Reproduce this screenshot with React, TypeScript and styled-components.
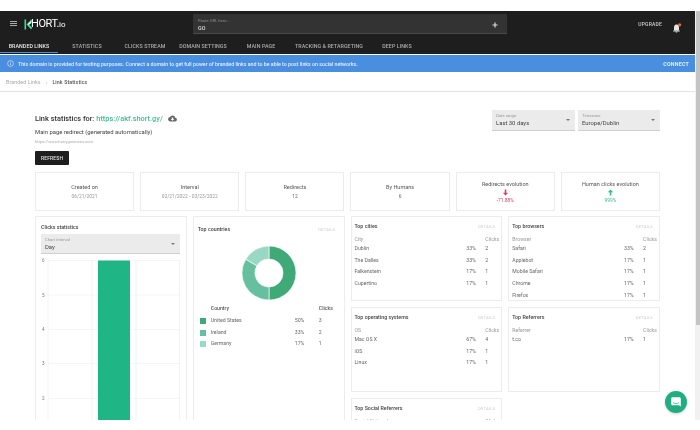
import React from "react";
import styled, { createGlobalStyle } from "styled-components";

const Global = createGlobalStyle`
  html, body { margin: 0; padding: 0; background: #fff; }
  body { width: 700px; height: 430px; overflow: hidden; font-family: Roboto, "Liberation Sans", sans-serif; }
`;

const Shot = styled.div`
  width: 700px;
  height: 430px;
  padding-top: 11px;
  box-sizing: border-box;
  display: flex;
  align-items: flex-start;
  background: #fff;
  filter: blur(0.75px);
`;
const Page = styled.div`
  width: 695px;
  height: 409px;
  overflow: hidden;
  display: flex;
  flex-direction: column;
  flex: none;
  color: #333;
`;
const ScrollTrack = styled.div`
  width: 5px;
  height: 409px;
  background: #f1f1f1;
  flex: none;
`;
const ScrollThumb = styled.div`
  width: 4px;
  height: 314px;
  margin-left: 1px;
  background: #c4c4c4;
`;

const Header = styled.header`
  background: #1e1e1e;
  height: 43px;
  flex: none;
  display: flex;
  flex-direction: column;
  color: #fff;
`;
const TopRow = styled.div`
  height: 29px;
  display: flex;
  align-items: flex-start;
  padding-left: 10px;
  padding-right: 13px;
`;
const Burger = styled.div`
  width: 7px;
  height: 3px;
  margin-top: 10px;
  border-top: 1px solid #aaa;
  border-bottom: 1px solid #aaa;
  box-sizing: content-box;
  background: linear-gradient(#aaa, #aaa) center / 100% 1px no-repeat;
`;
const Logo = styled.div`
  display: flex;
  align-items: center;
  margin-left: 7px;
  margin-top: 6px;
  height: 14px;
  width: 169px;
  color: #fff;
`;
const LogoText = styled.span`
  font-size: 11px;
  font-weight: 400;
  letter-spacing: -0.4px;
  line-height: 14px;
  margin-left: -2px;
`;
const LogoSuffix = styled.span`
  font-size: 8px;
  font-weight: 400;
`;
const UrlBox = styled.div`
  width: 314px;
  height: 20px;
  margin-top: 3px;
  background: #333;
  border-bottom: 1px solid #4a4a4a;
  box-sizing: border-box;
  padding: 3px 9px 0 5px;
  display: flex;
  align-items: center;
`;
const UrlFields = styled.div`
  flex: 1;
  display: flex;
  flex-direction: column;
`;
const UrlHint = styled.span`
  font-size: 4.2px;
  line-height: 6px;
  color: #8b8b8b;
`;
const UrlValue = styled.span`
  font-size: 5.4px;
  line-height: 8px;
  font-weight: 500;
  color: #ddd;
`;
const Upgrade = styled.span`
  font-size: 5px;
  font-weight: 500;
  letter-spacing: 0.2px;
  color: #ccc;
  margin-left: auto;
  margin-top: 10px;
  line-height: 7px;
`;
const BellWrap = styled.div`
  margin-left: 10px;
  margin-top: 7px;
  width: 10px;
  height: 10px;
`;
const Tabs = styled.nav`
  height: 14px;
  display: flex;
`;
const Tab = styled.div<{ $active?: boolean }>`
  min-width: 58px;
  padding: 0 5px;
  box-sizing: border-box;
  text-align: center;
  font-size: 5.3px;
  font-weight: 500;
  letter-spacing: 0.06px;
  line-height: 12px;
  white-space: nowrap;
  color: ${(p) => (p.$active ? "#e8e8e8" : "#ababab")};
  border-bottom: 1px solid ${(p) => (p.$active ? "#4a8ee0" : "transparent")};
  height: 13px;
`;
const Banner = styled.div`
  margin-top: 1px;
  height: 17px;
  flex: none;
  background: #4a8ee0;
  color: #e3eefb;
  display: flex;
  align-items: center;
  padding: 0 6px 0 7px;
  font-size: 5.25px;
  font-weight: 500;
`;
const BannerText = styled.span`
  margin-left: 4px;
  white-space: nowrap;
`;
const BannerAction = styled.span`
  margin-left: auto;
  font-weight: 700;
  letter-spacing: 0.25px;
`;
const Crumbs = styled.div`
  height: 20px;
  flex: none;
  border-bottom: 1px solid #e2e2e2;
  box-sizing: border-box;
  display: flex;
  align-items: center;
  gap: 5px;
  padding-left: 6px;
  font-size: 5.3px;
  letter-spacing: 0.1px;
  color: #aaa;
`;
const CrumbCurrent = styled.span`
  color: #555;
  font-weight: 500;
`;
const Content = styled.main`
  padding: 0 35px;
  display: flex;
  flex-direction: column;
  min-height: 0;
`;
const Intro = styled.section`
  height: 80px;
  flex: none;
  display: flex;
  justify-content: space-between;
`;
const IntroLeft = styled.div`
  display: flex;
  flex-direction: column;
  align-items: flex-start;
  padding-top: 21px;
`;
const TitleRow = styled.div`
  display: flex;
  align-items: center;
  height: 11px;
  font-size: 7.4px;
  font-weight: 500;
  color: #333;
  white-space: nowrap;
`;
const TitleLink = styled.span`
  color: #3fbd92;
  margin-left: 2px;
  margin-right: 5px;
`;
const Subtitle = styled.div`
  margin-top: 4px;
  font-size: 5.9px;
  line-height: 9px;
  color: #444;
`;
const SmallUrl = styled.div`
  font-size: 4.1px;
  line-height: 8px;
  margin-top: 1px;
  color: #aaa;
`;
const Refresh = styled.div`
  margin-top: 5px;
  width: 34px;
  height: 14px;
  background: #1e1e1e;
  color: #e0e0e0;
  font-size: 4.9px;
  font-weight: 500;
  letter-spacing: 0.2px;
  display: flex;
  align-items: center;
  justify-content: center;
  border-radius: 1px;
`;
const Selects = styled.div`
  display: flex;
  gap: 3px;
  padding-top: 18px;
`;
const SelectBox = styled.div<{ $w: number; $h: number }>`
  width: ${(p) => p.$w}px;
  height: ${(p) => p.$h}px;
  background: #ebebeb;
  border-bottom: 1px solid #cfcfcf;
  box-sizing: border-box;
  display: flex;
  align-items: center;
  justify-content: space-between;
  padding: 0 5px 0 4px;
`;
const SelectFields = styled.div`
  display: flex;
  flex-direction: column;
`;
const SelectLabel = styled.span`
  font-size: 4.2px;
  line-height: 6px;
  color: #999;
`;
const SelectValue = styled.span`
  font-size: 5.9px;
  line-height: 8px;
  color: #444;
`;
const Caret = styled.span`
  width: 0;
  height: 0;
  border-left: 2px solid transparent;
  border-right: 2px solid transparent;
  border-top: 2px solid #777;
`;
const StatRow = styled.section`
  display: grid;
  grid-template-columns: repeat(6, 1fr);
  gap: 6px;
  height: 39px;
  flex: none;
`;
const StatCard = styled.div`
  border: 1px solid #ececec;
  box-sizing: border-box;
  display: flex;
  flex-direction: column;
  align-items: center;
  justify-content: center;
`;
const StatLabel = styled.div`
  font-size: 5.5px;
  line-height: 9px;
  color: #555;
`;
const StatValue = styled.div<{ $tone?: string }>`
  font-size: 4.9px;
  line-height: 8px;
  color: ${(p) => p.$tone ?? "#999"};
`;
const ArrowWrap = styled.div`
  height: 7px;
  display: flex;
  align-items: center;
`;
const Board = styled.section`
  margin-top: 5px;
  display: grid;
  grid-template-columns: repeat(4, 1fr);
  grid-template-rows: 85px 85px 85px;
  column-gap: 6px;
  row-gap: 6px;
`;
const Card = styled.div<{ $tall?: boolean }>`
  border: 1px solid #ececec;
  box-sizing: border-box;
  padding: 5px 3px 0 3px;
  min-width: 0;
  ${(p) => (p.$tall ? "grid-row: 1 / span 3; height: 300px;" : "")}
`;
const ChartCard = styled(Card)`
  padding: 7px 5px 0 5px;
`;
const CardHead = styled.div<{ $pad?: boolean }>`
  display: flex;
  justify-content: space-between;
  align-items: center;
  height: 8px;
  ${(p) => (p.$pad ? "padding: 3px 5px 0 1px;" : "padding-right: 3px;")}
`;
const CardTitle = styled.span`
  font-size: 5.3px;
  font-weight: 500;
  color: #444;
`;
const Details = styled.span`
  font-size: 4.1px;
  letter-spacing: 0.2px;
  color: #ccc;
`;
const ChartTitle = styled.div`
  font-size: 5.3px;
  font-weight: 500;
  line-height: 7px;
  color: #444;
`;
const ChartSelect = styled.div`
  margin-top: 3px;
`;
const Plot = styled.div`
  margin-top: 6px;
  height: 180px;
`;
const DonutWrap = styled.div`
  display: flex;
  justify-content: center;
  margin-top: 10px;
  height: 57px;
`;
const DataTable = styled.table`
  width: 100%;
  border-collapse: collapse;
  table-layout: fixed;
  font-size: 5.2px;
  color: #666;
  margin-top: 4px;
`;
const LegendTable = styled(DataTable)`
  width: 137px;
  margin: 0 0 0 3px;
`;
const Th = styled.th<{ $w?: number; $legend?: boolean }>`
  font-weight: ${(p) => (p.$legend ? 500 : 400)};
  text-align: left;
  padding: 0;
  height: ${(p) => (p.$legend ? 15 : 9)}px;
  line-height: 8px;
  white-space: nowrap;
  color: ${(p) => (p.$legend ? "#555" : "#999")};
  ${(p) => (p.$w ? `width: ${p.$w}px;` : "")}
`;
const Td = styled.td`
  padding: 0;
  height: 11.67px;
  line-height: 11.67px;
  white-space: nowrap;
`;
const Swatch = styled.span<{ $c: string }>`
  display: block;
  width: 6px;
  height: 6px;
  background: ${(p) => p.$c};
`;
const Fab = styled.div`
  position: fixed;
  left: 665px;
  top: 391px;
  width: 22px;
  height: 22px;
  border-radius: 50%;
  background: #20ad82;
  box-shadow: 0 1px 3px rgba(0, 0, 0, 0.18);
  display: flex;
  align-items: center;
  justify-content: center;
`;

const tabs = ["BRANDED LINKS", "STATISTICS", "CLICKS STREAM", "DOMAIN SETTINGS", "MAIN PAGE", "TRACKING & RETARGETING", "DEEP LINKS"];

type Row = [string, string, string];
type Panel = { title: string; col: string; rows: Row[] };

const panels: Panel[] = [
  { title: "Top cities", col: "City", rows: [["Dublin", "33%", "2"], ["The Dalles", "33%", "2"], ["Falkenstein", "17%", "1"], ["Cupertino", "17%", "1"]] },
  { title: "Top browsers", col: "Browser", rows: [["Safari", "33%", "2"], ["Applebot", "17%", "1"], ["Mobile Safari", "17%", "1"], ["Chrome", "17%", "1"], ["Firefox", "17%", "1"]] },
  { title: "Top operating systems", col: "OS", rows: [["Mac OS X", "67%", "4"], ["iOS", "17%", "1"], ["Linux", "17%", "1"]] },
  { title: "Top Referrers", col: "Referrer", rows: [["t.co", "17%", "1"]] },
  { title: "Top Social Referrers", col: "Social Network", rows: [] },
];

const countries: [string, string, string, string][] = [
  ["#3fa978", "United States", "50%", "3"],
  ["#66c0a0", "Ireland", "33%", "2"],
  ["#99d8c4", "Germany", "17%", "1"],
];

const DataPanel = ({ p }: { p: Panel }) => (
  <Card>
    <CardHead>
      <CardTitle>{p.title}</CardTitle>
      <Details>DETAILS</Details>
    </CardHead>
    <DataTable>
      <thead>
        <tr>
          <Th>{p.col}</Th>
          <Th $w={19}></Th>
          <Th $w={13}>Clicks</Th>
        </tr>
      </thead>
      <tbody>
        {p.rows.map((r) => (
          <tr key={r[0]}>
            <Td>{r[0]}</Td>
            <Td>{r[1]}</Td>
            <Td>{r[2]}</Td>
          </tr>
        ))}
      </tbody>
    </DataTable>
  </Card>
);

const Donut = () => {
  const arc = (from: number, to: number) => {
    const R = 27, r = 14, c = 30;
    const pt = (rad: number, f: number) => {
      const a = 2 * Math.PI * f;
      return `${c + rad * Math.sin(a)} ${c - rad * Math.cos(a)}`;
    };
    const large = to - from > 0.5 ? 1 : 0;
    return `M${pt(R, from)} A${R} ${R} 0 ${large} 1 ${pt(R, to)} L${pt(r, to)} A${r} ${r} 0 ${large} 0 ${pt(r, from)} Z`;
  };
  return (
    <svg width="60" height="60" viewBox="0 0 60 60">
      <path d={arc(0, 0.5)} fill="#3fa978" stroke="#fff" strokeWidth="0.6" />
      <path d={arc(0.5, 0.835)} fill="#66c0a0" stroke="#fff" strokeWidth="0.6" />
      <path d={arc(0.835, 1)} fill="#99d8c4" stroke="#fff" strokeWidth="0.6" />
    </svg>
  );
};

const Chart = () => (
  <svg width="139" height="180" viewBox="0 0 139 180" style={{ display: "block", overflow: "visible" }}>
    {[0, 34.5, 69, 103, 138].map((y) => (
      <line key={y} x1="7" x2="139" y1={y + 0.5} y2={y + 0.5} stroke="#f0f0f0" strokeWidth="0.7" />
    ))}
    {[7, 51, 95, 138.5].map((x) => (
      <line key={x} x1={x} x2={x} y1="0" y2="180" stroke="#eeeeee" strokeWidth="0.7" />
    ))}
    <rect x="57" y="0.5" width="32" height="180" fill="#20b584" />
    {["6", "5", "4", "3", "2"].map((t, i) => (
      <text key={t} x="1" y={[2, 36.5, 71, 105, 139.5][i]} fontSize="4.6" fill="#777" fontFamily="Roboto, sans-serif">{t}</text>
    ))}
  </svg>
);

export default function App() {
  return (
    <>
      <Global />
      <Shot>
        <Page>
          <Header>
            <TopRow>
              <Burger />
              <Logo>
                <svg width="9" height="11" viewBox="0 0 9 11">
                  <path d="M0.5 0.5h1.6v10H0.5z" fill="#3ddc97" />
                  <path d="M2.5 5.5L7 0.8 8.4 2 5 5.5l3.4 3.6L7 10.3z" fill="#3ddc97" />
                  <path d="M3.5 5.5L6.4 2.4 7.6 3.4 5.6 5.5z" fill="#fff" />
                </svg>
                <LogoText>HORT.</LogoText>
                <LogoSuffix>io</LogoSuffix>
              </Logo>
              <UrlBox>
                <UrlFields>
                  <UrlHint>Paste URL here...</UrlHint>
                  <UrlValue>GO</UrlValue>
                </UrlFields>
                <svg width="6" height="6" viewBox="0 0 6 6">
                  <path d="M3 .5v5M.5 3h5" stroke="#ddd" strokeWidth="1.2" />
                </svg>
              </UrlBox>
              <Upgrade>UPGRADE</Upgrade>
              <BellWrap>
                <svg width="10" height="10" viewBox="0 0 10 10">
                  <path d="M2 7.5V4.2C2 2.8 3 1.8 4.2 1.6h.6C6 1.8 7 2.8 7 4.2v3.3z" fill="#e6e6e6" />
                  <path d="M1.3 7.6h6.4v.8H1.3zM3.7 8.8h1.6v.6H3.7z" fill="#e6e6e6" />
                  <circle cx="7.6" cy="1.8" r="1.6" fill="#ef6a4b" />
                </svg>
              </BellWrap>
            </TopRow>
            <Tabs>
              {tabs.map((t, i) => (
                <Tab key={t} $active={i === 0}>{t}</Tab>
              ))}
            </Tabs>
          </Header>
          <Banner>
            <svg width="7" height="7" viewBox="0 0 7 7">
              <circle cx="3.5" cy="3.5" r="2.9" fill="none" stroke="#e9f2fd" strokeWidth="0.6" />
              <path d="M3.5 3.1v2M3.5 1.8v.6" stroke="#e9f2fd" strokeWidth="0.6" />
            </svg>
            <BannerText>This domain is provided for testing purposes. Connect a domain to get full power of branded links and to be able to post links on social networks.</BannerText>
            <BannerAction>CONNECT</BannerAction>
          </Banner>
          <Crumbs>
            <span>Branded Links</span>
            <span>›</span>
            <CrumbCurrent>Link Statistics</CrumbCurrent>
          </Crumbs>
          <Content>
            <Intro>
              <IntroLeft>
                <TitleRow>
                  Link statistics for: <TitleLink>https://akf.short.gy/</TitleLink>
                  <svg width="9" height="7" viewBox="0 0 24 18">
                    <path d="M19.35 7.04A7.49 7.49 0 0 0 12 1a7.5 7.5 0 0 0-6.65 4.04A6 6 0 0 0 6 17h13a5 5 0 0 0 .35-9.96zM17 10l-5 5-5-5h3V6h4v4h3z" fill="#666" />
                  </svg>
                </TitleRow>
                <Subtitle>Main page redirect (generated automatically)</Subtitle>
                <SmallUrl>https://www.harryguinness.com</SmallUrl>
                <Refresh>REFRESH</Refresh>
              </IntroLeft>
              <Selects>
                <SelectBox $w={83} $h={21}>
                  <SelectFields>
                    <SelectLabel>Date range</SelectLabel>
                    <SelectValue>Last 30 days</SelectValue>
                  </SelectFields>
                  <Caret />
                </SelectBox>
                <SelectBox $w={82} $h={21}>
                  <SelectFields>
                    <SelectLabel>Timezone</SelectLabel>
                    <SelectValue>Europe/Dublin</SelectValue>
                  </SelectFields>
                  <Caret />
                </SelectBox>
              </Selects>
            </Intro>
            <StatRow>
              <StatCard><StatLabel>Created on</StatLabel><StatValue>06/21/2021</StatValue></StatCard>
              <StatCard><StatLabel>Interval</StatLabel><StatValue>02/21/2022 - 03/23/2022</StatValue></StatCard>
              <StatCard><StatLabel>Redirects</StatLabel><StatValue $tone="#666">12</StatValue></StatCard>
              <StatCard><StatLabel>By Humans</StatLabel><StatValue $tone="#666">6</StatValue></StatCard>
              <StatCard>
                <StatLabel>Redirects evolution</StatLabel>
                <ArrowWrap>
                  <svg width="7" height="7" viewBox="0 0 7 7"><path d="M3.5 6.5L.8 3.7h1.9V.5h1.6v3.2h1.9z" fill="#d0455f" /></svg>
                </ArrowWrap>
                <StatValue $tone="#d0455f">-71.88%</StatValue>
              </StatCard>
              <StatCard>
                <StatLabel>Human clicks evolution</StatLabel>
                <ArrowWrap>
                  <svg width="7" height="7" viewBox="0 0 7 7"><path d="M3.5.5L.8 3.3h1.9v3.2h1.6V3.3h1.9z" fill="#35b98b" /></svg>
                </ArrowWrap>
                <StatValue $tone="#35b98b">999%</StatValue>
              </StatCard>
            </StatRow>
            <Board>
              <ChartCard $tall>
                <ChartTitle>Clicks statistics</ChartTitle>
                <ChartSelect>
                  <SelectBox $w={139} $h={20}>
                    <SelectFields>
                      <SelectLabel>Chart interval</SelectLabel>
                      <SelectValue>Day</SelectValue>
                    </SelectFields>
                    <Caret />
                  </SelectBox>
                </ChartSelect>
                <Plot><Chart /></Plot>
              </ChartCard>
              <Card $tall>
                <CardHead $pad>
                  <CardTitle>Top countries</CardTitle>
                  <Details>DETAILS</Details>
                </CardHead>
                <DonutWrap><Donut /></DonutWrap>
                <LegendTable>
                  <thead>
                    <tr>
                      <Th $w={11} $legend></Th>
                      <Th $legend>Country</Th>
                      <Th $w={24} $legend></Th>
                      <Th $w={18} $legend>Clicks</Th>
                    </tr>
                  </thead>
                  <tbody>
                    {countries.map((c) => (
                      <tr key={c[1]}>
                        <Td><Swatch $c={c[0]} /></Td>
                        <Td>{c[1]}</Td>
                        <Td>{c[2]}</Td>
                        <Td>{c[3]}</Td>
                      </tr>
                    ))}
                  </tbody>
                </LegendTable>
              </Card>
              {panels.map((p) => (
                <DataPanel key={p.title} p={p} />
              ))}
            </Board>
          </Content>
        </Page>
        <ScrollTrack><ScrollThumb /></ScrollTrack>
        <Fab>
          <svg width="12" height="12" viewBox="0 0 12 12">
            <path d="M2.6 1.2h6.8c.8 0 1.4.6 1.4 1.4v7.9L8.9 9.3H2.6c-.8 0-1.4-.6-1.4-1.4V2.6c0-.8.6-1.4 1.4-1.4z" fill="#fff" />
            <path d="M3 6.6c1.7 1.2 4.3 1.2 6 0" stroke="#20ad82" strokeWidth="0.7" fill="none" />
          </svg>
        </Fab>
      </Shot>
    </>
  );
}
